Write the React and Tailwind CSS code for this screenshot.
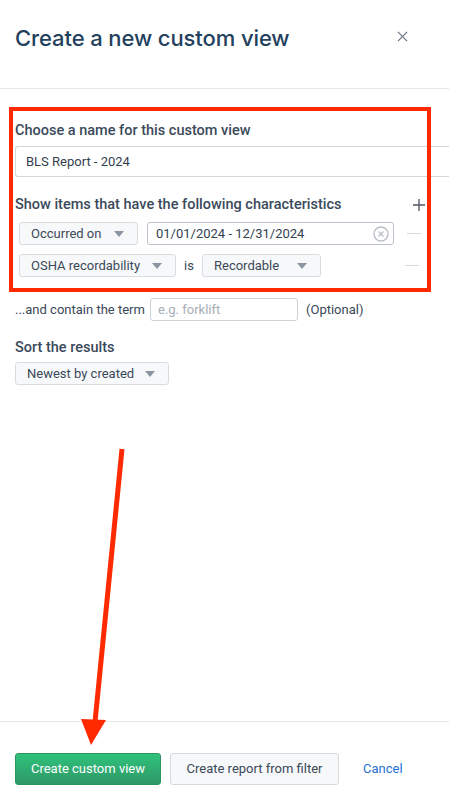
import React from "react";

function Caret() {
  return (
    <svg className="w-[10px] h-[6px] text-[#8b95a1] shrink-0" viewBox="0 0 10 6" fill="currentColor">
      <path d="M0 0h10L5 6z" />
    </svg>
  );
}

function Select({ label, width }) {
  return (
    <div
      className={`${width} h-[23px] flex items-center justify-between pl-[11px] pr-[13px] bg-[#f7f8fa] border border-[#d9dde2] rounded-[3px] text-[13px] text-[#3a4858]`}
    >
      <span className="whitespace-nowrap">{label}</span>
      <Caret />
    </div>
  );
}

function Minus() {
  return <div className="w-[14px] h-px bg-[#d6dade] ml-[13px]" />;
}

export default function App() {
  return (
    <div
      className="relative w-[449px] h-[804px] bg-white overflow-hidden flex flex-col"
      style={{ fontFamily: "Roboto, 'Noto Sans', 'Liberation Sans', sans-serif" }}
    >
      {/* Header */}
      <div className="h-[89px] px-[15px] pt-[24px] flex items-start justify-between border-b border-[#e4e7eb] shrink-0">
        <h1 className="font-['Inter',sans-serif] text-[22px] leading-[28px] font-medium text-[#23405d] tracking-[-0.1px]">
          Create a new custom view
        </h1>
        <button className="mr-[26px] mt-[7px] text-[#6b7785]">
          <svg className="w-[11px] h-[11px]" viewBox="0 0 12 12" stroke="currentColor" strokeWidth="1.4">
            <path d="M1 1l10 10M11 1L1 11" />
          </svg>
        </button>
      </div>

      {/* Body */}
      <div className="flex-1 pl-[15px] pt-[32px]">
        <label className="block text-[14.5px] leading-[20px] font-medium text-[#3b4a5b]">
          Choose a name for this custom view
        </label>
        <div className="mt-[5px] h-[31px] flex items-center pl-[10px] border border-[#d3d7dc] rounded-l-[3px] border-r-0 text-[13px] text-[#33414f]">
          BLS Report - 2024
        </div>

        <div className="mt-[18px] flex items-center justify-between pr-[24px]">
          <label className="text-[14.5px] leading-[20px] font-medium text-[#3b4a5b]">
            Show items that have the following characteristics
          </label>
          <svg className="w-[12px] h-[12px] text-[#4b5563]" viewBox="0 0 12 12" stroke="currentColor" strokeWidth="1.3">
            <path d="M6 0v12M0 6h12" />
          </svg>
        </div>

        <div className="mt-[7px] pl-[4px] flex items-center">
          <Select label="Occurred on" width="w-[119px]" />
          <div className="ml-[9px] w-[247px] h-[23px] flex items-center justify-between pl-[8px] pr-[4px] border border-[#bcc3cc] rounded-[3px] text-[13px] text-[#33414f]">
            <span>01/01/2024 - 12/31/2024</span>
            <svg className="w-[16px] h-[16px] text-[#b9bfc7]" viewBox="0 0 16 16" fill="none" stroke="currentColor" strokeWidth="1.3">
              <circle cx="8" cy="8" r="7" />
              <path d="M5.5 5.5l5 5M10.5 5.5l-5 5" />
            </svg>
          </div>
          <Minus />
        </div>

        <div className="mt-[9px] pl-[4px] flex items-center">
          <Select label="OSHA recordability" width="w-[157px]" />
          <span className="w-[26px] text-center text-[13px] text-[#3a4858]">is</span>
          <Select label="Recordable" width="w-[119px]" />
          <div className="ml-[71px]">
            <Minus />
          </div>
        </div>

        <div className="mt-[21px] flex items-center text-[13px] text-[#3a4858]">
          <span className="w-[126px] whitespace-nowrap">...and contain the term</span>
          <div className="ml-[9px] w-[148px] h-[23px] flex items-center pl-[7px] border border-[#cdd2d8] rounded-[3px] text-[#a7aeb6]">
            e.g. forklift
          </div>
          <span className="ml-[8px]">(Optional)</span>
        </div>

        <label className="block mt-[17px] text-[14.5px] leading-[20px] font-medium text-[#3b4a5b]">
          Sort the results
        </label>
        <div className="mt-[4px]">
          <Select label="Newest by created" width="w-[154px]" />
        </div>
      </div>

      {/* Footer */}
      <div className="h-[83px] shrink-0 border-t border-[#e4e7eb] px-[15px] pt-[31px] flex items-start">
        <button className="w-[146px] h-[32px] rounded-[3px] border border-[#2a9462] bg-gradient-to-b from-[#2ec27b] to-[#2f9868] text-white text-[13px]">
          Create custom view
        </button>
        <button className="ml-[9px] w-[169px] h-[32px] rounded-[3px] border border-[#d6dade] bg-[#f7f8fa] text-[#3a4858] text-[13px]">
          Create report from filter
        </button>
        <button className="ml-[24px] h-[32px] text-[13px] text-[#1f6fd1]">Cancel</button>
      </div>

      {/* Annotation overlay */}
      <div className="absolute left-[9px] top-[107px] w-[422px] h-[185px] border-[4px] border-[#ff2a00] pointer-events-none" />
      <svg className="absolute left-0 top-0 w-[449px] h-[804px] pointer-events-none" viewBox="0 0 449 804">
        <path d="M122 449L95 722" stroke="#ff2a00" strokeWidth="5" />
        <path d="M81 719L106 720L91 745z" fill="#ff2a00" />
      </svg>
    </div>
  );
}
